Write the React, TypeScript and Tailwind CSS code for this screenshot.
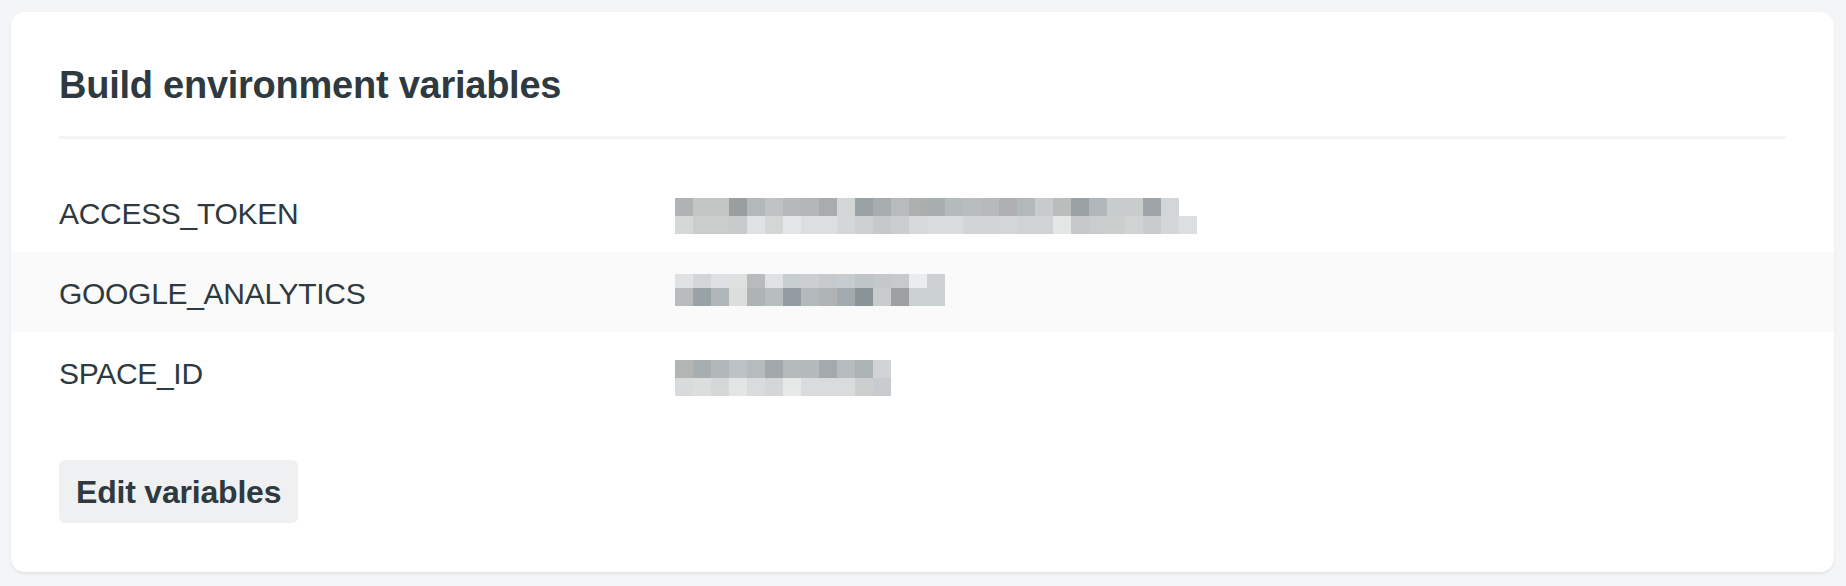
// Build environment variables card – values are pixelated (redacted) like the screenshot

type Variable = {
  name: string;
  offset: string; // top margin of the redacted value inside its row
  topHeight: string; // height of first block line
  top: string[];
  bottom: string[];
};

const variables: Variable[] = [
  {
    name: "ACCESS_TOKEN",
    offset: "mt-[26px]",
    topHeight: "h-[18px]",
    top: [
      "#b0b2b3", "#c4c6c6", "#c4c6c6", "#9a9e9f", "#b3b8bb", "#c0c3c3", "#b6b8b9",
      "#b4b7b8", "#a9abac", "#d3d6d6", "#9aa1a4", "#a7adaf", "#b7bbbc", "#adafaf",
      "#a8adaf", "#b5babd", "#b9bdbe", "#b6babc", "#aeb0b1", "#b3b8bb", "#c8cbcd",
      "#bbbdbc", "#9aa2a6", "#b1b7ba", "#c9cccd", "#c9cccd", "#9ea4a7", "#d3d6d8",
    ],
    bottom: [
      "#d6d7d7", "#cbcdcd", "#cbcdcd", "#c8cacb", "#dfe1e2", "#d4d6d6", "#e5e6e7",
      "#dcdedf", "#dcdedf", "#d4d6d7", "#ccd0d2", "#c6c8ca", "#cbcecf", "#d7d9da",
      "#d9dbdc", "#d9dbdc", "#d2d5d6", "#d2d5d6", "#d3d5d6", "#d0d3d5", "#d0d3d5",
      "#e5e7e7", "#c6c9cb", "#caccce", "#cbcecd", "#d0d2d4", "#c9cbce", "#d4d7d8",
      "#dcdee0",
    ],
  },
  {
    name: "GOOGLE_ANALYTICS",
    offset: "mt-[22px]",
    topHeight: "h-[14px]",
    top: [
      "#dfe1e2", "#d3d5d6", "#dde1e4", "#dfe0e0", "#b7bbbd", "#dfe1e2", "#c8cdd0",
      "#cbcfd1", "#c6cacc", "#c7ccd0", "#bfc4c7", "#c4c8c9", "#c6cacc", "#eaedf0",
      "#cdd1d3",
    ],
    bottom: [
      "#b9bbbc", "#99a2a6", "#afb5b8", "#dcdedd", "#aeb3b5", "#b8bdbd", "#939ca0",
      "#b4b9bb", "#b1b4b5", "#a3abaf", "#8a9396", "#c9cccd", "#9da1a3", "#cbd0d2",
      "#cbd0d2",
    ],
  },
  {
    name: "SPACE_ID",
    offset: "mt-[28px]",
    topHeight: "h-[18px]",
    top: [
      "#b3b4b4", "#a8adb0", "#b3b7b9", "#bcc2c5", "#b6bbbd", "#a2a8ab", "#b5babd",
      "#b4b9bb", "#a3a9ac", "#b7bbbd", "#adb2b5", "#d1d3d5",
    ],
    bottom: [
      "#d9dadb", "#dcdddd", "#d5d7d8", "#e3e5e5", "#d9dbdc", "#d4d6d7", "#e7e8e8",
      "#d9dbdc", "#d9dbdc", "#d9dbdc", "#cdcfcf", "#c8cccf",
    ],
  },
];

function Redacted({ v }: { v: Variable }) {
  return (
    <div className={`flex flex-col ${v.offset}`}>
      <div className="flex">
        {v.top.map((c, i) => (
          <div key={i} className={`w-[18px] ${v.topHeight}`} style={{ backgroundColor: c }} />
        ))}
      </div>
      <div className="flex">
        {v.bottom.map((c, i) => (
          <div key={i} className="h-[18px] w-[18px]" style={{ backgroundColor: c }} />
        ))}
      </div>
    </div>
  );
}

export default function App() {
  return (
    <div className="min-h-screen bg-[#f4f5f7] pl-[11px] pr-3 pt-3 font-['Liberation_Sans',Arial,sans-serif] text-[#2e3940]">
      <section className="rounded-[14px] bg-white pt-[51px] pb-[49px] shadow-[0_2px_3px_rgba(0,0,0,0.07)]">
        <h2 className="px-12 text-[38px] leading-[44px] font-bold tracking-[-0.25px]">
          Build environment variables
        </h2>
        <div className="mx-12 mt-[29px] h-[3px] bg-[#f2f4f6]" />

        {/* Variable list */}
        <div className="mt-[33px]">
          {variables.map((v, i) => (
            <div
              key={v.name}
              className={`grid h-20 grid-cols-[616px_1fr] items-start px-12 ${i % 2 === 1 ? "bg-[#fafafa]" : ""}`}
            >
              <div className="mt-[24px] text-[30px] leading-[36px] tracking-[-0.3px]">{v.name}</div>
              <Redacted v={v} />
            </div>
          ))}
        </div>

        <div className="mt-12 px-12">
          <button className="flex h-[63px] items-center rounded-[6px] bg-[#eff0f2] px-[17px] text-[32px] font-bold tracking-[-0.2px]">
            Edit variables
          </button>
        </div>
      </section>
    </div>
  );
}
